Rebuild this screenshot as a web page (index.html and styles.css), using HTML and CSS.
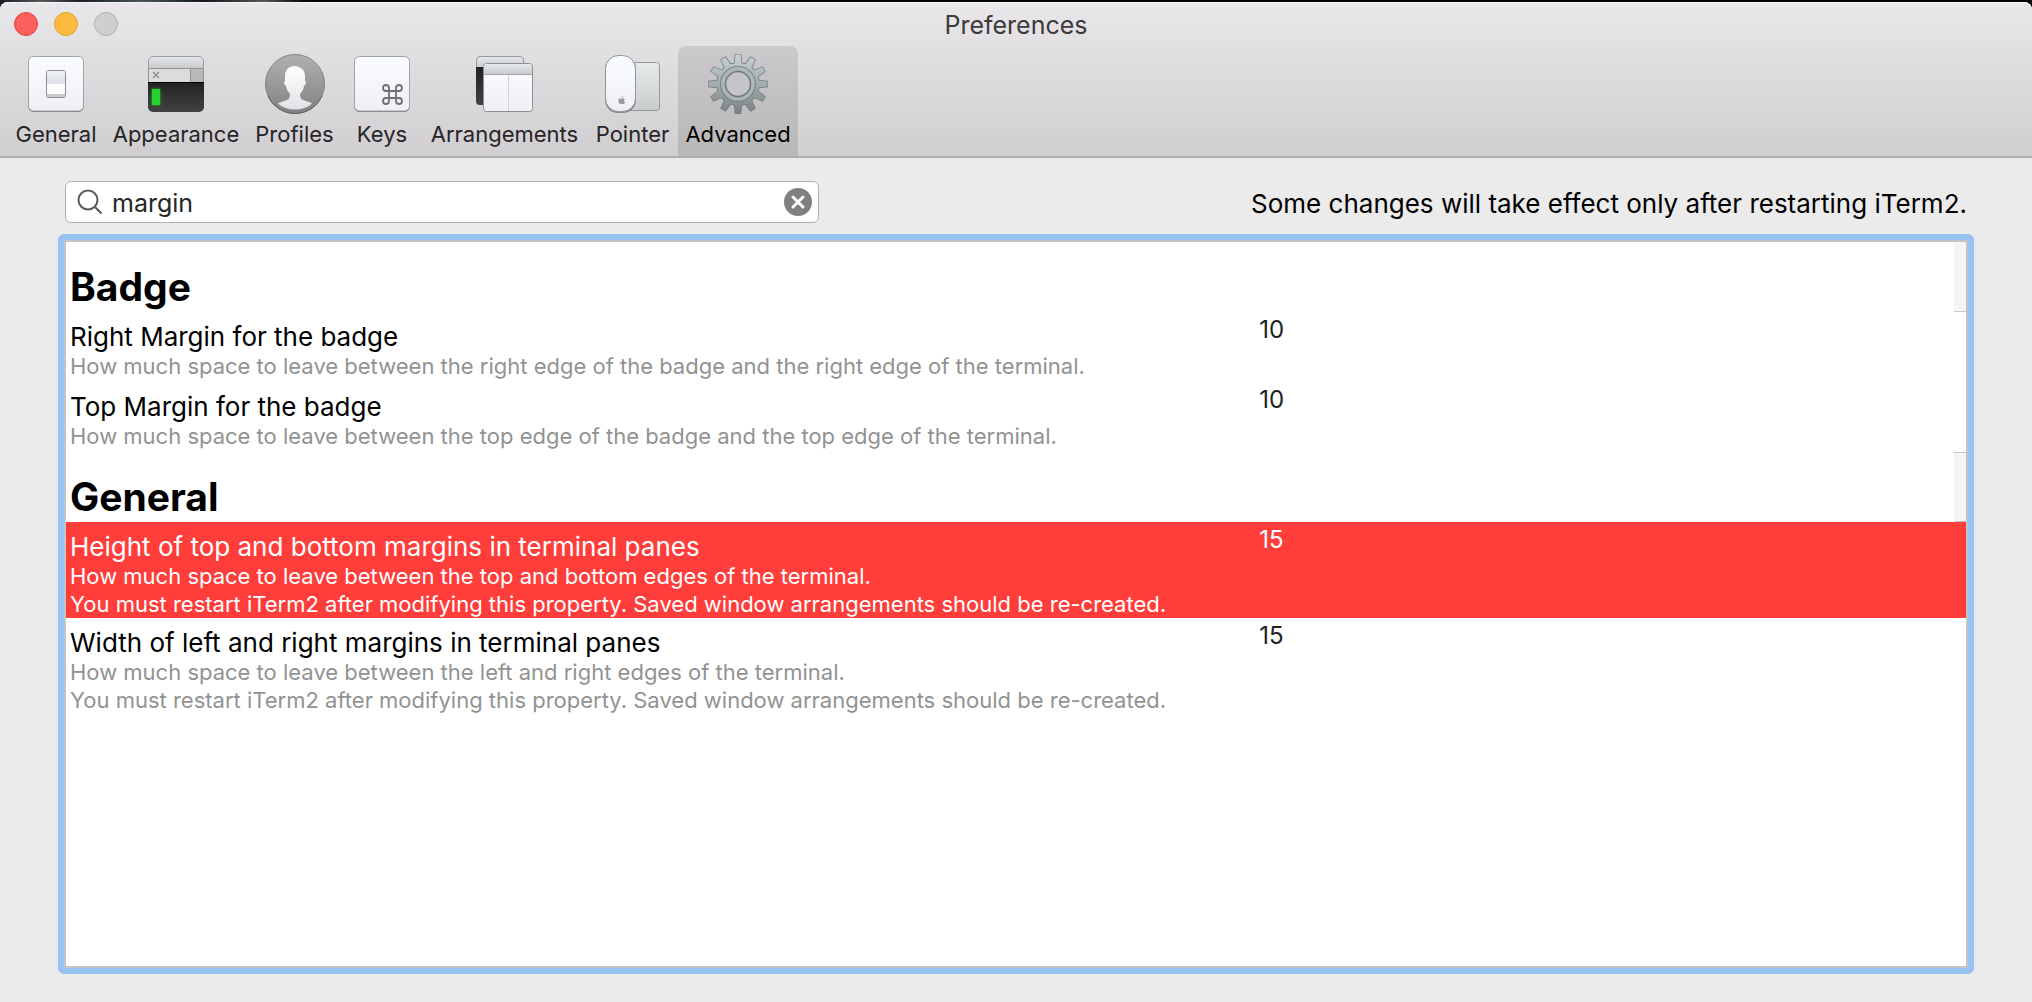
FILE: index.html
```html
<!DOCTYPE html>
<html lang="en">
<head>
<meta charset="utf-8">
<title>Preferences</title>
<link rel="stylesheet" href="styles.css">
</head>
<body>
<div class="window">
  <header class="chrome">
    <div class="titlebar">
      <div class="lights">
        <button class="light close" aria-label="Close"></button>
        <button class="light minimize" aria-label="Minimize"></button>
        <button class="light zoom" aria-label="Zoom" disabled></button>
      </div>
      <h1 class="title">Preferences</h1>
    </div>
    <nav class="toolbar">
      <button class="tool">
        <svg class="icon" viewBox="0 0 60 60" aria-hidden="true">
          <defs>
            <linearGradient id="key" x1="0" y1="0" x2="0" y2="1"><stop offset="0" stop-color="#fafdff"/><stop offset="1" stop-color="#f0eff4"/></linearGradient>
            <linearGradient id="knob" x1="0" y1="0" x2="0" y2="1"><stop offset="0" stop-color="#f2f3f7"/><stop offset="1" stop-color="#dcdfe8"/></linearGradient>
          </defs>
          <rect x="2.5" y="3" width="55" height="55" rx="5" fill="#77777b"/>
          <rect x="2.5" y="2.5" width="55" height="54.500" rx="5" fill="url(#key)" stroke="#a3a3a6"/>
          <rect x="20.500" y="16.500" width="19" height="27" rx="2" fill="#fdfdfe" stroke="#8b8b90"/>
          <path d="M21 17h18v13H21z" fill="url(#knob)"/>
          <path d="M21 40h18v3H21z" fill="#c9cbc9"/>
        </svg>
        <span>General</span>
      </button>
      <button class="tool">
        <svg class="icon" viewBox="0 0 60 60" aria-hidden="true">
          <defs>
            <linearGradient id="bar" x1="0" y1="0" x2="0" y2="1"><stop offset="0" stop-color="#e6eaec"/><stop offset="1" stop-color="#c9cbcd"/></linearGradient>
            <linearGradient id="term" x1="0" y1="0" x2="0" y2="1"><stop offset="0" stop-color="#222"/><stop offset="1" stop-color="#424242"/></linearGradient>
            <filter id="glow" x="-50%" y="-50%" width="200%" height="200%"><feGaussianBlur stdDeviation="1.500"/></filter>
          </defs>
          <path d="M2 14V7a5 5 0 0 1 5-5h46a5 5 0 0 1 5 5v7z" fill="url(#bar)"/>
          <path d="M2.500 14V7A4.500 4.500 0 0 1 7 2.500h46A4.500 4.500 0 0 1 57.500 7v7" fill="none" stroke="#9b9da0"/>
          <path d="M2 14h42v14H2z" fill="#dcdcde"/>
          <path d="M44 14h14v14H44z" fill="#b6b8ba"/>
          <path d="M2 14.500h56M44.500 14v14M2.500 14v14M57.500 14v14" stroke="#929496" fill="none"/>
          <path d="M7 18l6 6M13 18l-6 6" stroke="#8a8a8c" stroke-width="1.300"/>
          <path d="M2 28h56v25a5 5 0 0 1-5 5H7a5 5 0 0 1-5-5z" fill="url(#term)"/>
          <path d="M2 28.500h56" stroke="#000"/>
          <rect x="6" y="35" width="8" height="16" fill="#1fc924" filter="url(#glow)"/>
          <rect x="6" y="35" width="8" height="16" fill="#24d22b"/>
        </svg>
        <span>Appearance</span>
      </button>
      <button class="tool">
        <svg class="icon" viewBox="0 0 60 60" aria-hidden="true">
          <defs>
            <linearGradient id="disc" x1="0" y1="0" x2="0" y2="1"><stop offset="0" stop-color="#b0b0b0"/><stop offset="1" stop-color="#828282"/></linearGradient>
            <linearGradient id="bust" x1="0" y1="0" x2="0" y2="1"><stop offset="0" stop-color="#fff"/><stop offset="1" stop-color="#e0e2e6"/></linearGradient>
          </defs>
          <circle cx="30" cy="30" r="29.500" fill="url(#disc)" stroke="#828282"/>
          <path d="M3 42a29.500 29.500 0 0 0 54 0" fill="none" stroke="#606060"/>
          <path d="M30 12c-6 0-10 4-10 10v5c-1.500 0-1 4 1 5 .5 4 2.500 6 4 8 0 3-.5 5-3 6-4 1.500-7 2-9 3.500 4.500 4 10.500 6 17 6s12.500-2 17-6c-2-1.500-5-2-9-3.500-2.500-1-3-3-3-6 1.500-2 3.500-4 4-8 2-1 2.500-5 1-5v-5c0-5-3-8-6-8.500-1-1-2.500-1.500-4-1.500z" fill="url(#bust)"/>
        </svg>
        <span>Profiles</span>
      </button>
      <button class="tool">
        <svg class="icon" viewBox="0 0 60 60" aria-hidden="true">
          <rect x="2.500" y="3" width="55" height="55" rx="5" fill="#77777b"/>
          <rect x="2.500" y="2.500" width="55" height="54.500" rx="5" fill="url(#key)" stroke="#a3a3a6"/>
          <path d="M37 37h7v7h-7zM37 37h-3a3 3 0 1 1 3-3zM44 37v-3a3 3 0 1 1 3 3zM44 44h3a3 3 0 1 1-3 3zM37 44v3a3 3 0 1 1-3-3z" fill="none" stroke="#707074" stroke-width="1.800"/>
        </svg>
        <span>Keys</span>
      </button>
      <button class="tool">
        <svg class="icon" viewBox="0 0 60 60" aria-hidden="true">
          <path d="M1.500 14V6A3.500 3.500 0 0 1 5 2.500h40A3.500 3.500 0 0 1 48.500 6v8z" fill="url(#bar)" stroke="#97999b"/>
          <path d="M1 13h10v38H5a4 4 0 0 1-4-4z" fill="url(#term)"/>
          <rect x="8.500" y="9.500" width="49" height="48" rx="3" fill="url(#key)" stroke="#8c8e90"/>
          <path d="M9 20v-7a3 3 0 0 1 3-3h42a3 3 0 0 1 3 3v7z" fill="url(#bar)"/>
          <path d="M8 20.500h50" stroke="#a0a2a4"/>
          <path d="M33.500 21v36" stroke="#d2d3d7"/>
        </svg>
        <span>Arrangements</span>
      </button>
      <button class="tool">
        <svg class="icon" viewBox="0 0 60 60" aria-hidden="true">
          <defs>
            <linearGradient id="pad" x1="0" y1="0" x2="0" y2="1"><stop offset="0" stop-color="#e4eaea"/><stop offset="1" stop-color="#c8cccc"/></linearGradient>
          </defs>
          <rect x="22.500" y="8.500" width="34" height="48" rx="3" fill="url(#pad)" stroke="#949898"/>
          <rect x="2" y="2" width="31" height="57" rx="13" fill="#88888b"/>
          <rect x="2.500" y="1.500" width="30" height="56" rx="13" fill="url(#key)" stroke="#949496"/>
          <path transform="translate(4 8.500) scale(.8)" d="M18.300 44.500c.2-1.200 1-2.200 2-2.500.1 1.200-.8 2.300-2 2.500zM18.200 45.300c.8 0 1.400-.5 2.200-.5.700 0 1.300.3 1.800.9-1.600 1-1.300 3.400.4 4-.5 1.300-1.300 2.300-2.200 2.300-.7 0-1.200-.4-2-.4s-1.400.4-2 .4c-1.500 0-3.200-5.700-.9-6.900 1-.5 2 .2 2.700.2z" fill="#98989b"/>
        </svg>
        <span>Pointer</span>
      </button>
      <button class="tool selected" aria-pressed="true">
        <svg class="icon" viewBox="0 0 60 60" aria-hidden="true">
          <defs>
            <linearGradient id="steel" gradientUnits="userSpaceOnUse" x1="0" y1="0" x2="0" y2="60"><stop offset="0" stop-color="#c6d3d8"/><stop offset=".5" stop-color="#a3acae"/><stop offset="1" stop-color="#7a8082"/></linearGradient>
            <path id="tooth" d="M26 14L27.500 .5h5L34 14z"/>
            <g id="cog">
              <use href="#tooth"/><use href="#tooth" transform="rotate(30 30 30)"/><use href="#tooth" transform="rotate(60 30 30)"/><use href="#tooth" transform="rotate(90 30 30)"/><use href="#tooth" transform="rotate(120 30 30)"/><use href="#tooth" transform="rotate(150 30 30)"/><use href="#tooth" transform="rotate(180 30 30)"/><use href="#tooth" transform="rotate(210 30 30)"/><use href="#tooth" transform="rotate(240 30 30)"/><use href="#tooth" transform="rotate(270 30 30)"/><use href="#tooth" transform="rotate(300 30 30)"/><use href="#tooth" transform="rotate(330 30 30)"/>
              <circle cx="30" cy="30" r="21"/>
            </g>
            <mask id="gearmask"><use href="#cog" fill="#fff"/><circle cx="30" cy="30" r="12" fill="#000"/></mask>
          </defs>
          <use href="#cog" fill="none" stroke="#737b7e" stroke-width="1.500"/>
          <path d="M0 0h60v60H0z" fill="url(#steel)" mask="url(#gearmask)"/>
          <circle cx="30" cy="30" r="17.500" fill="none" stroke="#7d878a" stroke-width="1.200"/>
          <circle cx="30" cy="30" r="15" fill="none" stroke="#acb6b9" stroke-width="3"/>
          <circle cx="30" cy="30" r="12.500" fill="#c5c4c6" stroke="#6f787b" stroke-width="1.500"/>
        </svg>
        <span>Advanced</span>
      </button>
    </nav>
  </header>
  <main class="content">
    <div class="controls">
      <div class="search">
        <label class="search-label" for="search" aria-label="Search">
          <svg width="26" height="26" viewBox="0 0 26 26" aria-hidden="true"><circle cx="11" cy="11" r="9.500" fill="none" stroke="#5a5a5a" stroke-width="2"/><path d="M17.500 17.500l7 7" stroke="#5a5a5a" stroke-width="2.200"/></svg>
        </label>
        <input id="search" class="search-input" type="text" value="margin">
        <button class="clear" aria-label="Clear search">
          <svg width="28" height="28" viewBox="0 0 28 28" aria-hidden="true"><circle cx="14" cy="14" r="14" fill="#808080"/><path d="M9 9l10 10M19 9L9 19" stroke="#fff" stroke-width="3" stroke-linecap="round"/></svg>
        </button>
      </div>
      <p class="note">Some changes will take effect only after restarting iTerm2.</p>
    </div>
    <div class="list">
      <table class="settings">
        <colgroup><col class="col-name"><col></colgroup>
        <tbody>
          <tr class="group"><th colspan="2" scope="rowgroup">Badge</th></tr>
          <tr>
            <td><div class="name">Right Margin for the badge</div><div class="desc">How much space to leave between the right edge of the badge and the right edge of the terminal.</div></td>
            <td class="value">10</td>
          </tr>
          <tr>
            <td><div class="name">Top Margin for the badge</div><div class="desc">How much space to leave between the top edge of the badge and the top edge of the terminal.</div></td>
            <td class="value">10</td>
          </tr>
        </tbody>
        <tbody>
          <tr class="group"><th class="ruled" colspan="2" scope="rowgroup">General</th></tr>
          <tr class="current">
            <td><div class="name">Height of top and bottom margins in terminal panes</div><div class="desc">How much space to leave between the top and bottom edges of the terminal.<br>You must restart iTerm2 after modifying this property. Saved window arrangements should be re-created.</div></td>
            <td class="value">15</td>
          </tr>
          <tr>
            <td><div class="name">Width of left and right margins in terminal panes</div><div class="desc">How much space to leave between the left and right edges of the terminal.<br>You must restart iTerm2 after modifying this property. Saved window arrangements should be re-created.</div></td>
            <td class="value">15</td>
          </tr>
        </tbody>
      </table>
    </div>
  </main>
</div>
</body>
</html>
```
FILE: styles.css
```css
* { box-sizing: border-box; }

body {
  margin: 0;
  padding-top: 2px;
  background: #060606 linear-gradient(90deg, #1c2026, #55595c 2%, #1c2026 4%, #4a5557 7%, #15181c 10%, #55585a 13%, #060606 15%) no-repeat 0 0 / 100% 8px;
  font-family: Inter, "Liberation Sans", sans-serif;
  color: #000;
}

button {
  padding: 0;
  border: 0;
  background: none;
  font: inherit;
  color: inherit;
}

.window {
  display: flex;
  flex-direction: column;
  min-height: calc(100vh - 2px);
  border-radius: 8px 8px 0 0;
  background: #ebebeb;
}

.chrome {
  border-bottom: 2px solid #aeacae;
  border-radius: 8px 8px 0 0;
  background: linear-gradient(#e9e7e9, #d0ced0);
  box-shadow: inset 0 1px #f6f5f6;
}

.titlebar {
  display: grid;
  grid-template-columns: 1fr auto 1fr;
  align-items: center;
  height: 44px;
  padding: 0 14px;
}

.lights {
  display: flex;
  gap: 16px;
}

.light {
  width: 24px;
  height: 24px;
  border: 1px solid;
  border-radius: 50%;
}

.close { background: #fc605c; border-color: #e0443f; }
.minimize { background: #fdbc40; border-color: #dea032; }
.zoom { background: #cfcfcf; border-color: #b2b1b2; }

.title {
  margin: 0;
  padding-top: 2px;
  font-size: 25px;
  font-weight: 400;
  line-height: 32px;
  color: #3c3a3c;
}

.toolbar {
  display: grid;
  grid-template-columns: 98px 142px 95px 80px 165px 91px 120px;
  padding-left: 7px;
}

.tool {
  display: flex;
  flex-direction: column;
  align-items: center;
  gap: 6px;
  padding: 8px 0;
  font-size: 22px;
  line-height: 28px;
  color: #262426;
}

.tool.selected {
  border-radius: 8px 8px 0 0;
  background: linear-gradient(#cbc9cb, #b9b8b9);
  color: #000;
}

.icon {
  width: 60px;
  height: 60px;
}

.content {
  flex: 1;
  display: flex;
  flex-direction: column;
  gap: 11px;
  padding: 23px 58px 28px;
}

.controls {
  display: flex;
  align-items: center;
  justify-content: space-between;
  padding: 0 7px;
}

.search {
  display: flex;
  align-items: center;
  flex: 0 1 754px;
  height: 42px;
  padding: 0 6px 0 11px;
  border: 1px solid #b0b0b0;
  border-radius: 6px;
  background: #fff;
}

.search-label, .clear, .clear svg, .search-label svg { display: block; }

.search-input {
  flex: 1;
  min-width: 0;
  height: 38px;
  padding: 2px 9px 0;
  border: 0;
  outline: 0;
  background: none;
  font: inherit;
  font-size: 25px;
  color: #262626;
}

.note {
  margin: 0;
  padding-top: 4px;
  font-size: 26px;
  line-height: 32px;
}

.list {
  flex: 1;
  border: 6px solid #97c2f1;
  border-radius: 6px;
  background: #fff;
  box-shadow: inset 0 0 0 2px #c4c4c2;
  padding: 2px;
}

.settings {
  width: 100%;
  border-collapse: collapse;
  table-layout: fixed;
}

.col-name { width: 63%; }

.settings th {
  height: 70px;
  padding: 20px 4px 0;
  font-size: 39px;
  line-height: 50px;
  text-align: left;
  background:
    linear-gradient(#c8c8c8, #c8c8c8) right bottom / 12px 1px no-repeat,
    linear-gradient(#f5f5f5, #f5f5f5) right / 12px 100% no-repeat;
}

.settings .ruled {
  background:
    linear-gradient(#c8c8c8, #c8c8c8) right top / 12px 1px no-repeat,
    linear-gradient(#c8c8c8, #c8c8c8) right bottom / 12px 1px no-repeat,
    linear-gradient(#f5f5f5, #f5f5f5) right / 12px 100% no-repeat;
}

.settings td {
  height: 70px;
  padding: 10px 4px 0;
  vertical-align: top;
}

.name {
  font-size: 26px;
  line-height: 30px;
}

.desc {
  font-size: 22px;
  line-height: 28px;
  color: #929292;
}

.settings .value {
  padding: 4px 0 0;
  font-size: 24px;
  line-height: 28px;
  color: #222;
}

.col-name { width: 62.8%; }

.current { background: #ff3d3b; }

.current .name, .current .desc, .settings .current .value { color: #fff; }
```
